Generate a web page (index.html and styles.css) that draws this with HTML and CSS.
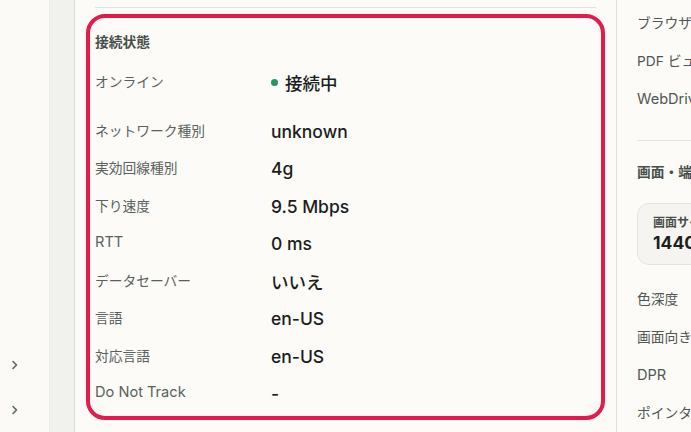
FILE: index.html
```html
<!DOCTYPE html>
<html lang="ja">
<head>
    <meta charset="UTF-8" />
    <title>環境情報</title>
    <link rel="stylesheet" href="styles.css">
</head>
<body>
    <aside class="sidebar">
        <div class="nav-toggle">
            <svg width="8" height="10" viewBox="0 0 8 10"><polyline points="2,1.5 5.5,5 2,8.5" /></svg>
        </div>
        <div class="nav-toggle">
            <svg width="8" height="10" viewBox="0 0 8 10"><polyline points="2,1.5 5.5,5 2,8.5" /></svg>
        </div>
    </aside>

    <div class="rail"></div>

    <main class="panel">
        <div class="divider"></div>

        <section class="info-group highlighted">
            <h2 class="group-title">接続状態</h2>
            <dl class="info-list">
                <div class="info-row first">
                    <dt>オンライン</dt>
                    <dd><span class="status-dot"></span>接続中</dd>
                </div>
                <div class="info-row">
                    <dt>ネットワーク種別</dt>
                    <dd>unknown</dd>
                </div>
                <div class="info-row">
                    <dt>実効回線種別</dt>
                    <dd>4g</dd>
                </div>
                <div class="info-row">
                    <dt>下り速度</dt>
                    <dd>9.5 Mbps</dd>
                </div>
                <div class="info-row">
                    <dt class="latin">RTT</dt>
                    <dd>0 ms</dd>
                </div>
                <div class="info-row">
                    <dt>データセーバー</dt>
                    <dd>いいえ</dd>
                </div>
                <div class="info-row">
                    <dt>言語</dt>
                    <dd>en-US</dd>
                </div>
                <div class="info-row">
                    <dt>対応言語</dt>
                    <dd>en-US</dd>
                </div>
                <div class="info-row">
                    <dt class="latin">Do Not Track</dt>
                    <dd>-</dd>
                </div>
            </dl>
        </section>
    </main>

    <aside class="side-panel">
        <div class="side-row">ブラウザバージョン</div>
        <div class="side-row">PDF ビューア</div>
        <div class="side-row latin">WebDriver</div>

        <div class="side-divider"></div>

        <h2 class="side-title">画面・端末</h2>

        <div class="stat-card">
            <div class="stat-label">画面サイズ</div>
            <div class="stat-value">1440 × 900</div>
        </div>

        <div class="side-row spaced">色深度</div>
        <div class="side-row">画面向き</div>
        <div class="side-row latin">DPR</div>
        <div class="side-row">ポインタ</div>
    </aside>
</body>
</html>
```

FILE: styles.css
```css
* {
    margin: 0;
    padding: 0;
    box-sizing: border-box;
}

body {
    display: flex;
    height: 432px;
    overflow: hidden;
    font-family: 'Inter', 'Noto Sans CJK JP', sans-serif;
    background-color: #fcfbf8;
    color: #1d201f;
}

/* Left navigation */
.sidebar {
    width: 50px;
    flex-shrink: 0;
    display: flex;
    flex-direction: column;
    justify-content: flex-end;
    background-color: #fbfaf6;
    border-right: 1px solid #ecebe6;
}

.nav-toggle {
    height: 45px;
    display: flex;
    align-items: center;
    padding-left: 11px;
}

.nav-toggle svg polyline {
    fill: none;
    stroke: #5d6863;
    stroke-width: 1.6;
    stroke-linecap: round;
    stroke-linejoin: round;
}

.rail {
    width: 25px;
    flex-shrink: 0;
    background-color: #f1f1ee;
    border-right: 1px solid #dfddd7;
}

/* Main column */
.panel {
    width: 542px;
    flex-shrink: 0;
    padding: 0 20px;
    border-right: 1px solid #e2e0da;
}

.divider {
    margin-top: 7px;
    border-top: 1px solid #e3e2dd;
}

.info-group {
    margin-top: 15px;
    padding-top: 10px;
    border-radius: 10px;
}

.highlighted {
    outline: 4px solid #e31d4b;
    outline-offset: 5px;
}

.group-title {
    font-size: 13.75px;
    font-weight: 700;
    line-height: 18px;
    color: #464e4a;
}

.info-list {
    margin-top: 11px;
}

.info-row {
    display: grid;
    grid-template-columns: 176px 1fr;
    align-items: center;
    height: 37.5px;
}

.info-row.first {
    margin-bottom: 11.5px;
}

.info-row dt {
    font-size: 13.75px;
    color: #59615d;
}

.info-row dt.latin {
    font-size: 14.6px;
}

.info-row dd {
    display: flex;
    align-items: center;
    font-size: 17.5px;
    font-weight: 500;
    color: #1b1e1d;
    padding-top: 3px;
}

.status-dot {
    width: 7px;
    height: 7px;
    border-radius: 50%;
    background-color: #1f9a63;
    margin-right: 7px;
}

/* Right column */
.side-panel {
    flex: 1;
    min-width: 0;
    padding: 4px 0 0 20px;
    white-space: nowrap;
    overflow: hidden;
}

.side-row {
    height: 38px;
    line-height: 38px;
    font-size: 13.75px;
    color: #4f5753;
}

.side-row.latin {
    font-size: 14.6px;
}

.side-row.spaced {
    margin-top: 15px;
}

.side-divider {
    margin-top: 22px;
    border-top: 1px solid #e3e2dd;
}

.side-title {
    margin-top: 21px;
    font-size: 13.75px;
    font-weight: 700;
    line-height: 20px;
    color: #464e4a;
}

.stat-card {
    margin-top: 21px;
    width: 160px;
    height: 62px;
    padding: 10px 15px;
    border: 1px solid #e4e3de;
    border-radius: 12px;
    background-color: #f5f4f0;
}

.stat-label {
    font-size: 12px;
    font-weight: 700;
    line-height: 18px;
    color: #454d49;
}

.stat-value {
    font-size: 17.5px;
    font-weight: 700;
    line-height: 22px;
    color: #1c1f1e;
}
```
